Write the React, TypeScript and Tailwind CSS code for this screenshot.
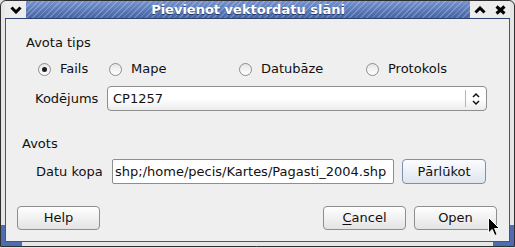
import React from "react";

const Radio = ({ checked }: { checked?: boolean }) => (
  <span className="w-[13px] h-[13px] rounded-full border border-[#8c8c8c] bg-linear-to-b from-[#e6e6e6] to-white flex items-center justify-center shrink-0">
    {checked && <span className="w-[5px] h-[5px] rounded-full bg-[#1e1e1e]" />}
  </span>
);

const RadioItem = ({ label, checked, w }: { label: string; checked?: boolean; w: string }) => (
  <div className={`flex items-center gap-[9px] ${w}`}>
    <Radio checked={checked} />
    <span>{label}</span>
  </div>
);

const Btn = ({ children, w, blue }: { children: React.ReactNode; w: string; blue?: boolean }) => (
  <button
    className={`${w} h-full rounded-[4px] border ${
      blue ? "border-[#7f8fae] from-[#fbfcfe] to-[#dfe5ef]" : "border-[#8e8e8e] from-white to-[#e3e3e3]"
    } bg-linear-to-b flex items-center justify-center text-[13px] text-[#111]`}
  >
    {children}
  </button>
);

export default function App() {
  return (
    <div className="w-[515px] h-[248px] bg-[#e4e4e4] overflow-hidden relative font-['DejaVu_Sans','Noto_Sans',sans-serif] text-[13px] text-[#111]">
      <div className="h-[247px] border border-[#2f2f2f] rounded-t-[6px] bg-[#e6e6e6] flex flex-col">
        {/* TITLE BAR */}
        <div className="h-[18px] flex border-b border-[#2c4372] mx-[4px]">
          <div className="w-[21px] bg-[#ececec] flex items-center justify-center">
            <svg width="12" height="8" viewBox="0 0 12 8">
              <polyline points="1.5,1.5 6,6 10.5,1.5" fill="none" stroke="#000" strokeWidth="3" />
            </svg>
          </div>
          <div className="flex-1 flex items-center justify-center bg-[repeating-linear-gradient(135deg,rgba(255,255,255,0.22)_0px,rgba(255,255,255,0.22)_1.2px,transparent_1.2px,transparent_4px),linear-gradient(#7393d0,#4563a3)]">
            <span className="font-bold text-white text-[13px] leading-none [text-shadow:0_1px_0_#23386a]">
              Pievienot vektordatu slāni
            </span>
          </div>
          <div className="w-[40px] bg-[#ececec] flex items-center">
            <div className="w-[20px] flex justify-center">
              <svg width="12" height="8" viewBox="0 0 12 8">
                <polyline points="1.5,6.5 6,2 10.5,6.5" fill="none" stroke="#000" strokeWidth="3" />
              </svg>
            </div>
            <div className="w-[20px] flex justify-center">
              <svg width="11" height="10" viewBox="0 0 11 10">
                <path d="M1.5 1.5 L9.5 8.5 M9.5 1.5 L1.5 8.5" stroke="#000" strokeWidth="3" />
              </svg>
            </div>
          </div>
        </div>

        {/* BODY */}
        <div className="flex-1 mx-[4px] border-x border-b border-[#555] bg-[#efefef] flex flex-col">
          <div className="h-[17px] mt-[15px] pl-[20px] leading-[17px]">Avota tips</div>

          <div className="h-[20px] mt-[8px] pl-[32px] flex items-center">
            <RadioItem label="Fails" checked w="w-[71px]" />
            <RadioItem label="Mape" w="w-[130px]" />
            <RadioItem label="Datubāze" w="w-[127px]" />
            <RadioItem label="Protokols" w="w-[110px]" />
          </div>

          <div className="h-[25px] mt-[7px] pl-[29px] pr-[22px] flex items-center">
            <span className="w-[72px] shrink-0">Kodējums</span>
            <div className="flex-1 h-full rounded-[4px] border border-[#8e8e8e] bg-linear-to-b from-white via-white to-[#ececec] flex items-center">
              <span className="flex-1 pl-[5px]">CP1257</span>
              <span className="w-px h-[17px] bg-[#b5b5b5]" />
              <span className="w-[20px] flex justify-center">
                <svg width="8" height="14" viewBox="0 0 8 14">
                  <polyline points="1,5 4,2 7,5" fill="none" stroke="#111" strokeWidth="1.5" />
                  <polyline points="1,9 4,12 7,9" fill="none" stroke="#111" strokeWidth="1.5" />
                </svg>
              </span>
            </div>
          </div>

          <div className="h-[17px] mt-[24px] pl-[16px] leading-[17px]">Avots</div>

          <div className="h-[25px] mt-[7px] pl-[30px] pr-[22px] flex items-center">
            <span className="w-[76px] shrink-0">Datu kopa</span>
            <div className="w-[282px] h-full rounded-[2px] border border-[#8e8e8e] bg-white flex items-center overflow-hidden pl-[2px] whitespace-nowrap">
              shp;/home/pecis/Kartes/Pagasti_2004.shp
            </div>
            <div className="ml-[8px] h-full">
              <Btn w="w-[84px]" blue>Pārlūkot</Btn>
            </div>
          </div>

          <div className="h-[24px] mt-[22px] pl-[11px] pr-[12px] flex">
            <Btn w="w-[83px]">Help</Btn>
            <div className="flex-1" />
            <div className="flex gap-[8px]">
              <Btn w="w-[83px]">
                <span className="underline underline-offset-2">C</span>ancel
              </Btn>
              <Btn w="w-[83px]">Open</Btn>
            </div>
          </div>
        </div>
        <div className="h-[4px]" />
      </div>

      {/* resize corner highlights */}
      <div className="absolute left-[1px] top-[225px] w-[21px] h-[21px] border-l-[4px] border-b-[4px] border-[#4d6db0]" />
      <div className="absolute right-[1px] top-[225px] w-[21px] h-[21px] border-r-[4px] border-b-[4px] border-[#4d6db0]" />

      {/* mouse cursor */}
      <svg className="absolute left-[488px] top-[217px]" width="13" height="20" viewBox="0 0 13 20">
        <path d="M0.5 0.5 L0.5 16 L4.2 12.4 L6.8 18.5 L9.2 17.5 L6.6 11.5 L11.5 11.5 Z" fill="#000" stroke="#fff" strokeWidth="1" />
      </svg>
    </div>
  );
}
